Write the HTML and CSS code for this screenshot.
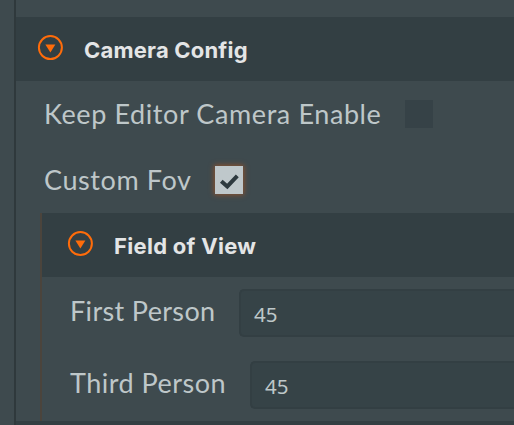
FILE: index.html
```html
<!DOCTYPE html>
<html lang="en">
<head>
<meta charset="utf-8">
<title>Camera Config</title>
<link rel="stylesheet" href="styles.css">
</head>
<body>
<main class="panel">
  <header class="header">
    <svg class="toggle" viewBox="0 0 26 26"><circle cx="13.4" cy="12.6" r="11.5"/><path d="M8.4 9.5h10l-5 8z"/></svg>
    <h2 class="title title-camera">Camera Config</h2>
  </header>
  <div class="row">
    <span class="label label-keep">Keep Editor Camera Enable</span>
    <span class="check"></span>
  </div>
  <div class="row">
    <span class="label label-custom">Custom Fov</span>
    <span class="check checked"><svg viewBox="0 0 28 28"><path d="M6.3 15.2l6 5.2L22.3 9.8"/></svg></span>
  </div>
  <section class="nested">
    <header class="header">
      <svg class="toggle" viewBox="0 0 26 26"><circle cx="13.4" cy="12.6" r="11.5"/><path d="M8.4 9.5h10l-5 8z"/></svg>
      <h3 class="title title-fov">Field of View</h3>
    </header>
    <div class="field">
      <span class="label label-first">First Person</span>
      <div class="input">45</div>
    </div>
    <div class="field">
      <span class="label label-third">Third Person</span>
      <div class="input">45</div>
    </div>
  </section>
  <div class="next-header"></div>
</main>
</body>
</html>
```
FILE: styles.css
```css
* { box-sizing: border-box; }
body {
  margin: 0;
  height: 425px;
  overflow: hidden;
  background: #3e4a4e;
  font-family: Lato, "Liberation Sans", sans-serif;
}
.panel {
  height: 425px;
  margin-left: 14px;
  padding-top: 17px;
  border-left: 2px solid #2f393c;
}
.header {
  display: flex;
  align-items: center;
  height: 64px;
  padding: 0 0 2px 21px;
  background: #333f43;
}
.toggle { width: 26px; height: 26px; margin-right: 21px; }
.toggle circle { fill: none; stroke: #ff6c0a; stroke-width: 2; }
.toggle path { fill: #ff6c0a; }
.title {
  margin: 4px 0 0;
  color: #e4e5e6;
  font: 700 22px/30px Inter, sans-serif;
  letter-spacing: 0.2px;
  white-space: nowrap;
}
.title-fov { letter-spacing: 0.3px; }
.row { display: flex; align-items: center; height: 66px; padding-left: 28px; }
.label {
  flex: none;
  color: #bec7c9;
  font-size: 27px;
  line-height: 36px;
  white-space: nowrap;
}
.label-keep { width: 361px; letter-spacing: 0.6px; }
.label-custom { width: 171px; letter-spacing: 0.6px; }
.check { width: 28px; height: 28px; background: #364247; }
.checked { background: #bfc8cb; box-shadow: 0 0 5px 1px #8c522e; }
.check svg { display: block; }
.check path { fill: none; stroke: #2e3a3f; stroke-width: 4; }
.nested { height: 208px; margin-left: 24px; border-left: 2px solid #4b443c; }
.nested .header { margin-bottom: 12px; padding-left: 25px; }
.field { display: flex; height: 48px; margin-bottom: 24px; padding-left: 28px; }
.field .label { line-height: 43px; }
.label-first { width: 169px; letter-spacing: 0.35px; }
.label-third { width: 180px; letter-spacing: 0.5px; }
.input {
  flex: 1;
  padding-left: 13px;
  border: 2px solid #333f43;
  border-right: 0;
  border-radius: 5px 0 0 5px;
  background: #364347;
  color: #bec7c9;
  font: 400 20.5px/47px "Noto Sans", sans-serif;
}
.next-header { height: 4px; background: #333f43; }
```
